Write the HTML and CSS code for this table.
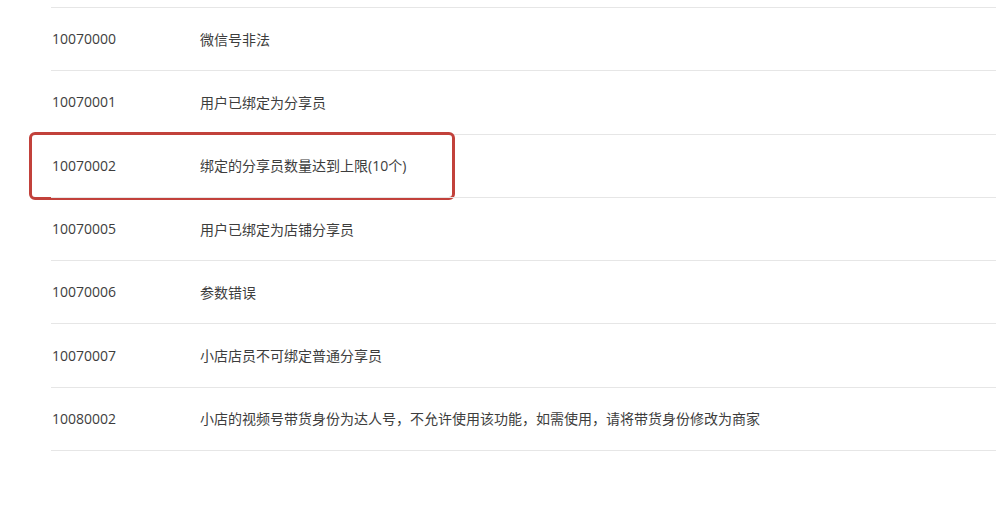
FILE: index.html
```html
<!doctype html>
<html lang="zh-CN">
  <head>
    <meta charset="UTF-8" />
    <meta name="viewport" content="width=device-width, initial-scale=1.0" />
    <title>错误码</title>
    <link rel="stylesheet" href="styles.css">
  </head>
  <body>
    <div id="doc">
      <div class="code-table">
        <div class="row"><div class="code">10070000</div><div class="desc">微信号非法</div></div>
        <div class="row"><div class="code">10070001</div><div class="desc">用户已绑定为分享员</div></div>
        <div class="row marked"><div class="code">10070002</div><div class="desc">绑定的分享员数量达到上限(10个)</div></div>
        <div class="row"><div class="code">10070005</div><div class="desc">用户已绑定为店铺分享员</div></div>
        <div class="row"><div class="code">10070006</div><div class="desc">参数错误</div></div>
        <div class="row"><div class="code">10070007</div><div class="desc">小店店员不可绑定普通分享员</div></div>
        <div class="row"><div class="code">10080002</div><div class="desc">小店的视频号带货身份为达人号，不允许使用该功能，如需使用，请将带货身份修改为商家</div></div>
      </div>
    </div>
  </body>
</html>
```

FILE: styles.css
```css
body {
  margin: 0;
  background-color: #fff;
  font-family: 'Open Sans', 'Noto Sans CJK SC', sans-serif;
  font-size: 14px;
  color: #3d3d3d;
}
#doc {
  padding: 7px 0 0 51px;
}
.code-table {
  border-bottom: 1px solid #e6e6e6;
}
.row {
  position: relative;
  display: flex;
  align-items: center;
  height: 63.3px;
  box-sizing: border-box;
  border-top: 1px solid #e6e6e6;
  padding-bottom: 1px;
}
.code {
  width: 149px;
  padding-left: 1px;
  box-sizing: border-box;
}
.desc {
  flex: 1;
}
.row.marked::after {
  content: '';
  position: absolute;
  left: -22px;
  top: -3px;
  width: 426px;
  height: 68px;
  box-sizing: border-box;
  border: 3px solid #c2413b;
  border-radius: 6px;
}
```
